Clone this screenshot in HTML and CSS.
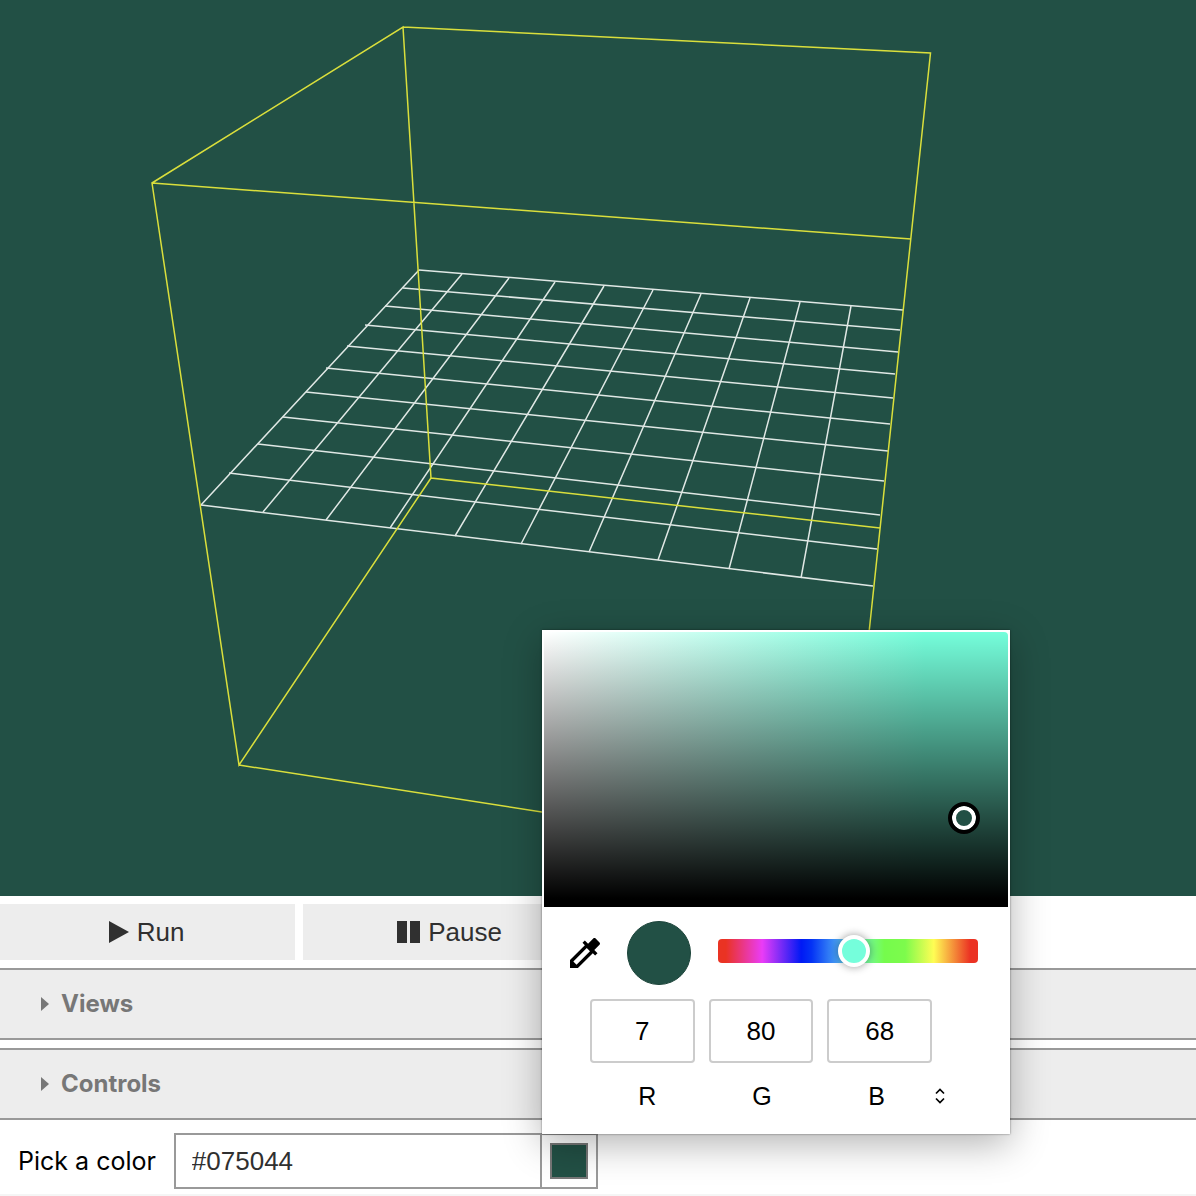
FILE: index.html
```html
<!DOCTYPE html>
<html lang="en">
<head>
<meta charset="utf-8">
<meta name="viewport" content="width=device-width, initial-scale=1">
<title>Scene viewer</title>
<link rel="stylesheet" href="styles.css">
</head>
<body>
<main class="viewer">
  <section class="scene" aria-label="3D scene">
    <svg class="scene-view" viewBox="0 0 1196 896" aria-hidden="true">
      <path class="grid" d="M419 270L903 310M403 288L900 330M385 306L898 352M365 325L895 374M347 346L893 398M326 368L890 424M306 392L888 451M283 417L884 481M258 444L880 515M229 473L877 549M201 505L873 586"/>
      <path class="grid" d="M419 270L201 505M462 274L263 512M509 278L326 520M555 282L390 528M604 286L455 536M653 290L521 544M701 294L589 552M750 298L658 560M800 302L729 569M851 306L801 578"/>
      <path class="box" d="M403 27L930.500 53L845 859M880 528L431 478L403 27L152 183L239 765L431 478M152 183L911 239M845 859L239 765"/>
    </svg>
  </section>

  <section class="panel">
    <div class="playback">
      <button class="play-button" type="button">
        <svg width="20" height="24" viewBox="0 0 20 24" aria-hidden="true"><path d="M0 1L20 12L0 23Z"/></svg>
        Run
      </button>
      <button class="play-button" type="button">
        <svg width="23" height="24" viewBox="0 0 23 24" aria-hidden="true"><path d="M0 1h10v22H0zM13 1h10v22h-10z"/></svg>
        Pause
      </button>
    </div>

    <details class="group">
      <summary class="group-title"><svg width="8" height="14" viewBox="0 0 8 14" aria-hidden="true"><path d="M0 0L8 7L0 14Z"/></svg>Views</summary>
    </details>
    <details class="group">
      <summary class="group-title"><svg width="8" height="14" viewBox="0 0 8 14" aria-hidden="true"><path d="M0 0L8 7L0 14Z"/></svg>Controls</summary>
    </details>

    <div class="color-row">
      <label class="color-label" for="color-text">Pick a color</label>
      <div class="color-field">
        <input class="color-text" id="color-text" type="text" value="#075044">
        <div class="swatch-holder">
          <input class="swatch" type="color" value="#225045" aria-label="Choose color">
          <div class="picker" role="dialog" aria-label="Color picker">
            <div class="shade"><span class="shade-handle"></span></div>
            <div class="picker-tools">
              <button class="dropper" type="button" aria-label="Eyedropper">
                <svg width="40" height="40" viewBox="0 0 24 24" aria-hidden="true"><path d="M20.71 5.63l-2.34-2.34c-.39-.39-1.02-.39-1.41 0l-3.12 3.12-1.93-1.91-1.41 1.41 1.42 1.42L3 16.25V21h4.75l8.92-8.92 1.42 1.42 1.41-1.41-1.92-1.92 3.12-3.12c.4-.4.4-1.03.01-1.42zM6.92 19L5 17.08l8.06-8.06 1.92 1.92L6.92 19z"/></svg>
              </button>
              <span class="current"></span>
              <input class="hue" type="range" min="0" max="360" value="189" aria-label="Hue">
            </div>
            <div class="channels">
              <input class="channel" id="red" type="text" value="7">
              <input class="channel" id="green" type="text" value="80">
              <input class="channel" id="blue" type="text" value="68">
            </div>
            <div class="channel-names">
              <label for="red">R</label>
              <label for="green">G</label>
              <label for="blue">B</label>
              <button class="format" type="button" aria-label="Change format">
                <svg width="12" height="16" viewBox="0 0 12 16" aria-hidden="true"><path d="M2 5.500L6 1.500L10 5.500M2 10.500L6 14.500L10 10.500"/></svg>
              </button>
            </div>
          </div>
        </div>
      </div>
    </div>
  </section>
</main>
</body>
</html>
```

FILE: styles.css
```css
* {
  box-sizing: border-box;
}

body {
  margin: 0;
  background: #fff;
  color: #000;
  font: 26px/32px "Liberation Sans", Arial, sans-serif;
}

button,
input {
  margin: 0;
  border: 0;
  border-radius: 0;
  font: inherit;
  color: inherit;
}

svg {
  display: block;
}

.viewer {
  display: flex;
  flex-direction: column;
  min-height: 100vh;
}

/* 3D scene */
.scene {
  flex: 1;
  background: #225045;
}

.scene-view {
  width: 100%;
}

.scene-view path {
  fill: none;
  stroke-width: 1.5;
}

.scene-view .grid {
  stroke: #e0e8e5;
}

.scene-view .box {
  stroke: #dadf3c;
}

/* Control panel */
.panel {
  display: flex;
  flex-direction: column;
  gap: 8px;
  padding-top: 8px;
  border-bottom: 2px solid #f5f5f5;
}

.playback {
  display: grid;
  grid-template-columns: 1fr 1fr;
  gap: 8px;
  width: 50%;
}

.play-button {
  display: flex;
  align-items: center;
  justify-content: center;
  gap: 8px;
  padding: 12px 14px 12px 12px;
  background: #ededed;
  color: #303030;
}

.play-button svg {
  fill: #303030;
}

.group {
  border-top: 2px solid #999;
  border-bottom: 2px solid #999;
  background: #ededed;
}

.group-title {
  display: flex;
  align-items: center;
  gap: 12px;
  padding: 18px 41px;
  color: #777;
  font: bold 24px/32px Inter, sans-serif;
}

.group-title svg {
  fill: #777;
}

.color-row {
  display: flex;
  align-items: center;
  gap: 18px;
  width: 50%;
  padding: 5px 0 5px 18px;
}

.color-label {
  white-space: nowrap;
  font: 25px/32px Inter, sans-serif;
}

.color-field {
  display: flex;
  flex: 1;
  min-width: 0;
  border: 2px solid #999;
}

.color-text {
  flex: 1;
  min-width: 0;
  padding: 10px 16px;
  background: #fff;
  color: #303030;
}

.swatch-holder {
  position: relative;
  border-left: 2px solid #999;
}

.swatch {
  display: block;
  width: 54px;
  height: 52px;
  padding: 8px;
  appearance: none;
  background: #fff;
}

.swatch::-webkit-color-swatch-wrapper {
  padding: 0;
}

.swatch::-webkit-color-swatch {
  border: 2px solid #777;
  border-radius: 0;
}

/* Color picker popup */
.picker {
  position: absolute;
  bottom: calc(100% + 1px);
  left: 0;
  width: 468px;
  padding: 2px 2px 22px;
  background: #fff;
  box-shadow: 0 0 2px rgba(0, 0, 0, 0.5), 0 10px 36px rgba(0, 0, 0, 0.3);
}

.shade {
  position: relative;
  height: 275px;
  border-top-right-radius: 4px;
  background: linear-gradient(to bottom, transparent, #000 97%), linear-gradient(to right, #fff, #75fedb 82%);
}

.shade-handle {
  position: absolute;
  top: 170px;
  left: 404px;
  width: 32px;
  height: 32px;
  border: 4px solid #000;
  border-radius: 50%;
  background: #225045;
  box-shadow: inset 0 0 0 4px #fff;
}

.picker-tools {
  display: flex;
  align-items: center;
  padding: 14px 30px 14px 21px;
}

.dropper {
  padding: 0;
  background: none;
}

.current {
  width: 64px;
  height: 64px;
  margin: 0 27px 0 22px;
  border: 1px solid #1c443a;
  border-radius: 50%;
  background: #225045;
}

.hue {
  flex: 1;
  min-width: 0;
  height: 24px;
  margin-bottom: 4px;
  border-radius: 4px;
  appearance: none;
  background: linear-gradient(to right, #ea3323 3%, #ea3cf7 17%, #0019f5 32%, #0433f5 36%, #47a0f5 46%, #75fbda 52%, #75fb4c 64%, #7dfb4c 72%, #fffd54 83%, #eb3223 97%);
}

.hue::-webkit-slider-thumb {
  appearance: none;
  width: 32px;
  height: 32px;
  border: 4px solid #fff;
  border-radius: 50%;
  background: #75fedb;
  box-shadow: 0 0 8px rgba(0, 0, 0, 0.4);
}

.channels {
  display: grid;
  grid-template-columns: repeat(3, 1fr);
  gap: 14px;
  padding: 0 76px 0 46px;
}

.channel {
  width: 100%;
  height: 64px;
  padding: 0;
  border: 2px solid #ccc;
  border-radius: 4px;
  background: #fff;
  text-align: center;
}

.channel-names {
  display: grid;
  grid-template-columns: repeat(3, 1fr) 12px;
  align-items: center;
  margin-top: 17px;
  padding: 0 62px 0 46px;
  font-size: 25px;
  text-align: center;
}

.format {
  padding: 0;
  background: none;
}

.format path {
  fill: none;
  stroke: #000;
  stroke-width: 1.7;
}
```
